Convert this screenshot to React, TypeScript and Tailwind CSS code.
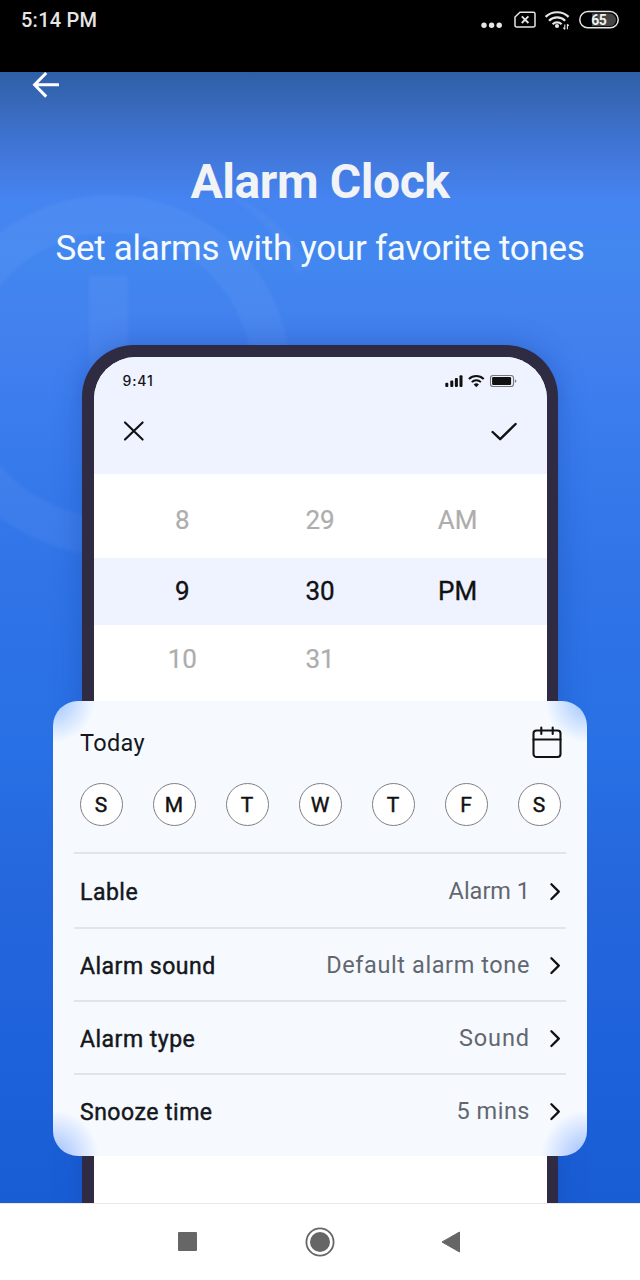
import React from "react";

const days = ["S", "M", "T", "W", "T", "F", "S"];

const settings = [
  { label: "Lable", value: "Alarm 1", row: "h-[75px] pt-px", spacing: "tracking-[0px]" },
  { label: "Alarm sound", value: "Default alarm tone", row: "h-[73px]", spacing: "tracking-[0.6px]" },
  { label: "Alarm type", value: "Sound", row: "h-[73px]", spacing: "tracking-[0.9px]" },
  { label: "Snooze time", value: "5 mins", row: "h-[74px]", spacing: "tracking-[0.5px]" },
];

function SystemBar() {
  return (
    <header className="flex h-[72px] items-start justify-between bg-black pl-[21px] pr-5 text-[#e6e6e6]">
      <span className="mt-2 text-[20px] font-medium leading-6 tracking-[0.25px]">5:14 PM</span>
      <svg className="mt-[9px] h-[22px] w-[140px]" viewBox="480 9 140 22" fill="none">
        <g fill="#e6e6e6">
          <circle cx="484" cy="25.2" r="2.7" />
          <circle cx="491.6" cy="25.2" r="2.7" />
          <circle cx="499.2" cy="25.2" r="2.7" />
        </g>
        <path
          d="M520 12.2h13.4a1.6 1.6 0 0 1 1.6 1.6v11.6a1.6 1.6 0 0 1-1.6 1.6h-16.8a1.6 1.6 0 0 1-1.6-1.6V17z"
          stroke="#e6e6e6"
          strokeWidth="1.5"
          strokeLinejoin="round"
        />
        <path d="m521.8 16.4 6.6 6.6m0-6.6-6.6 6.6" stroke="#e6e6e6" strokeWidth="1.8" />
        <g stroke="#e6e6e6" strokeWidth="2.2">
          <path d="M545.6 16.9a16.6 16.6 0 0 1 23 0" />
          <path d="M549 20.7a11.6 11.6 0 0 1 16.2 0" />
          <path d="M552.6 24.2a6.6 6.6 0 0 1 9 0" />
        </g>
        <circle cx="557" cy="26" r="2.1" fill="#e6e6e6" />
        <path d="M564.8 24.4v5m-1.4-1.8 1.4 1.8m2.6-.2v-5m1.3 1.6-1.3-1.6" stroke="#e6e6e6" strokeWidth="1.1" />
        <rect x="582" y="13.6" width="34" height="12.6" rx="6.3" fill="#454545" />
        <path d="M582 13h10v14h-10z" fill="#000" />
        <rect x="579.8" y="11.6" width="38.4" height="16.2" rx="8.1" stroke="#e6e6e6" strokeWidth="1.5" />
        <text x="598.8" y="24.6" textAnchor="middle" fill="#f0f0f0" className="text-[14px] font-bold tracking-[-0.5px]">
          65
        </text>
      </svg>
    </header>
  );
}

function Backdrop() {
  return (
    <svg className="absolute inset-0 h-[1131px] w-[640px]" viewBox="0 72 640 1131" aria-hidden="true">
      <defs>
        <filter id="soft" x="-20%" y="-20%" width="140%" height="140%">
          <feGaussianBlur stdDeviation="1.5" />
        </filter>
      </defs>
      <g filter="url(#soft)">
        <circle cx="110" cy="375" r="161" fill="none" stroke="#fff" strokeOpacity="0.045" strokeWidth="38" />
        <path d="M89 276h39v110H89z" fill="#fff" fillOpacity="0.045" />
        <path d="M218 188q58 22 92 78l-14 8q-18-48-78-86" fill="#fff" fillOpacity="0.03" />
      </g>
    </svg>
  );
}

function Phone() {
  return (
    <div className="relative mx-auto mt-[76px] h-[880px] w-[476px] rounded-t-[52px] bg-[#2e2b42] px-[11.5px] pt-[11.5px] shadow-[0_0_28px_rgba(20,65,160,0.4)]">
      <div className="h-full overflow-hidden rounded-t-[42px] bg-white">
        <div className="h-[117.5px] bg-[#eff2ff] px-[29px]">
          <div className="flex items-center justify-between pt-4">
            <span className="font-[Inter] text-[14px] font-medium leading-4 tracking-[0.9px] text-[#151515]">9:41</span>
            <svg className="h-4 w-[74px]" viewBox="444.5 372.5 74 16" fill="none">
              <g fill="#111">
                <rect x="445.8" y="382.2" width="3" height="4.3" rx="1" />
                <rect x="450.8" y="380" width="3" height="6.5" rx="1" />
                <rect x="455.4" y="377.4" width="3" height="9.1" rx="1" />
                <rect x="460" y="374.8" width="3" height="11.7" rx="1" />
                <path d="m476.8 386.7-2.6-2.7a3.8 3.8 0 0 1 5.2 0z" />
                <rect x="492.6" y="376.6" width="19" height="7.8" rx="1.2" />
                <path d="M515.4 378.7q3 1.8 0 3.6z" fill="#777" />
              </g>
              <path d="M469.4 378.4a10.8 10.8 0 0 1 14.8 0" stroke="#111" strokeWidth="2" />
              <path d="M472.2 381.6a6.7 6.7 0 0 1 9.2 0" stroke="#111" strokeWidth="1.8" />
              <rect x="491" y="375" width="23" height="11" rx="2.6" stroke="#777" strokeWidth="1.1" />
            </svg>
          </div>
          <div className="mt-[31px] flex items-center justify-between">
            <svg className="h-[24px] w-[24px]" viewBox="0 0 24 24" fill="none" stroke="#111" strokeWidth="2.1" strokeLinecap="round">
              <path d="m2 2.4 17.6 17.2M19.6 2.4 2 19.6" />
            </svg>
            <svg className="h-[24px] w-[28px]" viewBox="0 0 28 24" fill="none" stroke="#111" strokeWidth="2.4" strokeLinecap="round" strokeLinejoin="round">
              <path d="m2.6 12 7.6 7.2L25.6 4" />
            </svg>
          </div>
        </div>
        <div className="text-center text-[26px] font-normal text-[#adadad] [-webkit-text-stroke:0.2px_#adadad]">
          <div className="grid h-[84px] grid-cols-3 items-center px-5 pt-2">
            <span>8</span>
            <span>29</span>
            <span>AM</span>
          </div>
          <div className="grid h-[67px] grid-cols-3 items-center bg-[#eff2ff] px-5 text-[#111] [-webkit-text-stroke:0.35px_#111]">
            <span>9</span>
            <span>30</span>
            <span>PM</span>
          </div>
          <div className="grid h-[68px] grid-cols-3 items-center px-5">
            <span>10</span>
            <span>31</span>
            <span />
          </div>
        </div>
      </div>
    </div>
  );
}

function SettingsCard() {
  return (
    <section className="absolute left-[53px] top-[629px] h-[455px] w-[534px] overflow-hidden rounded-[25px] bg-[#f6faff] bg-[radial-gradient(circle_at_0_0,#a9cbff_6px,transparent_42px),radial-gradient(circle_at_100%_0,#a9cbff_6px,transparent_42px),radial-gradient(circle_at_0_100%,#a9c6ff_6px,transparent_46px),radial-gradient(circle_at_100%_100%,#a9c6ff_6px,transparent_46px)] px-[21px] text-[#14171c]">
      <div className="flex items-center justify-between pl-[6px] pr-[3px] pt-[23px]">
        <h2 className="text-[23.5px] font-normal leading-[38px] tracking-[0.35px]">Today</h2>
        <svg className="h-[36px] w-[32px]" viewBox="-0.5 1 32 36" fill="none" stroke="#111" strokeWidth="2.1" strokeLinecap="round" strokeLinejoin="round">
          <rect x="2" y="6.5" width="27" height="26.5" rx="3" />
          <path d="M2 15.5h27M9.8 3.5v6.5M21.2 3.5v6.5" />
        </svg>
      </div>
      <div className="mt-[21px] flex justify-between pl-[5.5px] pr-[5.5px]">
        {days.map((day, i) => (
          <span key={i} className="flex size-[43px] items-center justify-center rounded-full border border-[#7d7f85] bg-white pt-[2px] text-[21px] font-normal text-[#111] [-webkit-text-stroke:0.45px_#111]">
            {day}
          </span>
        ))}
      </div>
      <div className="mt-[26px]">
        {settings.map((item) => (
          <div key={item.label} className={`flex items-center justify-between border-t-2 border-[#e0e4ec] pl-[6px] pr-[4px] ${item.row}`}>
            <span className="mt-[5px] text-[23px] font-normal tracking-[0.5px] [-webkit-text-stroke:0.45px_#14171c]">{item.label}</span>
            <span className="mt-[2px] flex items-center text-[#62676f]">
              <span className={`text-[23.5px] font-normal ${item.spacing}`}>{item.value}</span>
              <svg className="ml-[18px] h-[20px] w-[14px]" viewBox="0 0 14 20" fill="none" stroke="#111" strokeWidth="2.3" strokeLinecap="round" strokeLinejoin="round">
                <path d="m3.4 2.2 7.4 7.4-7.4 7.4" />
              </svg>
            </span>
          </div>
        ))}
      </div>
    </section>
  );
}

function NavigationBar() {
  return (
    <nav className="flex h-[77px] items-center border-t border-[#e8e8e8] bg-white pl-[178px]">
      <div className="mb-px size-[19px] rounded-[1px] bg-[#666]" />
      <svg className="ml-[108px] size-[30px]" viewBox="0 0 30 30" fill="none">
        <circle cx="15" cy="15" r="13.6" stroke="#666" strokeWidth="1.8" />
        <circle cx="15" cy="15" r="10" fill="#666" />
      </svg>
      <svg className="ml-[106px] h-[22px] w-[20px]" viewBox="0 0 20 22">
        <path d="M18.5 1v20L1 11z" fill="#666" stroke="#666" strokeLinejoin="round" />
      </svg>
    </nav>
  );
}

export default function App() {
  return (
    <div className="h-[1280px] w-[640px] overflow-hidden bg-white font-[Roboto,sans-serif]">
      <SystemBar />
      <main className="relative h-[1131px] overflow-hidden bg-[linear-gradient(to_bottom,#2f5fa6_0px,#3768b8_30px,#3e72cf_64px,#437be0_96px,#4584f1_128px,#4287f0_180px,#4280ee_270px,#3a7cee_350px,#3074e7_500px,#2870e5_680px,#2566dc_820px,#1e62db_970px,#195dd5_1131px)]">
        <Backdrop />
        <svg className="relative ml-8 block h-[28px] w-[28px]" viewBox="0 0 28 28" fill="none" stroke="#fff" strokeWidth="3">
          <path d="M27 12.8H3M14.2 1 2.6 12.8l11.6 11.8" />
        </svg>
        <h1 className="relative mt-[54px] text-center text-[48px] font-bold leading-[56px] tracking-[-0.4px] text-[#f1f3f6]">Alarm Clock</h1>
        <p className="relative mt-[19px] text-center text-[35px] leading-[40px] tracking-[-0.3px] text-[#f5faff]">Set alarms with your favorite tones</p>
        <Phone />
        <SettingsCard />
      </main>
      <NavigationBar />
    </div>
  );
}
